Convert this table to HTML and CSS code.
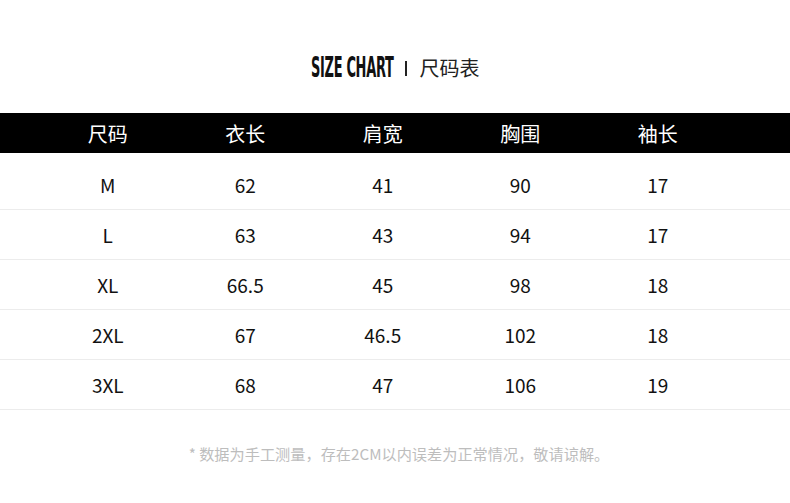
FILE: index.html
```html
<!DOCTYPE html>
<html lang="zh">
<head>
<meta charset="utf-8">
<link rel="stylesheet" href="styles.css">
</head>
<body>
<div class="page">
  <h1 class="title"><span class="en"><span class="en-text">SIZE CHART</span></span><span class="bar"></span><span class="cn">尺码表</span></h1>
  <div class="table">
    <div class="row head"><span>尺码</span><span>衣长</span><span>肩宽</span><span>胸围</span><span>袖长</span></div>
    <div class="row first"><span>M</span><span>62</span><span>41</span><span>90</span><span>17</span></div>
    <div class="row"><span>L</span><span>63</span><span>43</span><span>94</span><span>17</span></div>
    <div class="row"><span>XL</span><span>66.5</span><span>45</span><span>98</span><span>18</span></div>
    <div class="row"><span>2XL</span><span>67</span><span>46.5</span><span>102</span><span>18</span></div>
    <div class="row"><span>3XL</span><span>68</span><span>47</span><span>106</span><span>19</span></div>
  </div>
  <p class="note">* 数据为手工测量，存在2CM以内误差为正常情况，敬请谅解。</p>
</div>
</body>
</html>
```
FILE: styles.css
```css
html, body {
  margin: 0;
  padding: 0;
  background: #fff;
}
.page {
  width: 790px;
  height: 503px;
  font-family: "Noto Sans CJK SC", "Noto Sans", sans-serif;
  color: #111;
}
.title {
  margin: 0;
  height: 113px;
  display: flex;
  align-items: center;
  justify-content: center;
  padding-top: 23px;
  box-sizing: border-box;
  font-weight: normal;
  font-size: 20px;
  line-height: 28px;
}
.title .en {
  display: flex;
  align-items: center;
  width: 81px;
  height: 28px;
  white-space: nowrap;
}
.title .en-text {
  display: block;
  font-family: "DejaVu Sans Condensed", "DejaVu Sans", sans-serif;
  font-weight: bold;
  font-size: 28px;
  line-height: 28px;
  letter-spacing: -0.6px;
  color: #111;
  transform: scaleX(0.515);
  transform-origin: left center;
}
.title .bar {
  width: 2px;
  height: 15px;
  background: #222;
  margin: 1px 13px 0 13px;
}
.title .cn {
  font-size: 20px;
  color: #222;
}
.table {
  width: 790px;
}
.row {
  display: grid;
  grid-template-columns: repeat(5, 137.5px);
  padding-left: 39px;
  height: 50px;
  align-items: center;
  border-bottom: 1.5px solid #ececec;
  box-sizing: border-box;
  font-size: 19px;
}
.row span {
  text-align: center;
}
.row.head {
  background: #000;
  color: #fff;
  height: 40px;
  border-bottom: none;
  font-size: 20px;
}
.row.first {
  height: 57px;
  padding-top: 7px;
}
.note {
  margin: 32px 0 0;
  padding-left: 8px;
  text-align: center;
  font-size: 15.2px;
  color: #bdbdbd;
}
```
